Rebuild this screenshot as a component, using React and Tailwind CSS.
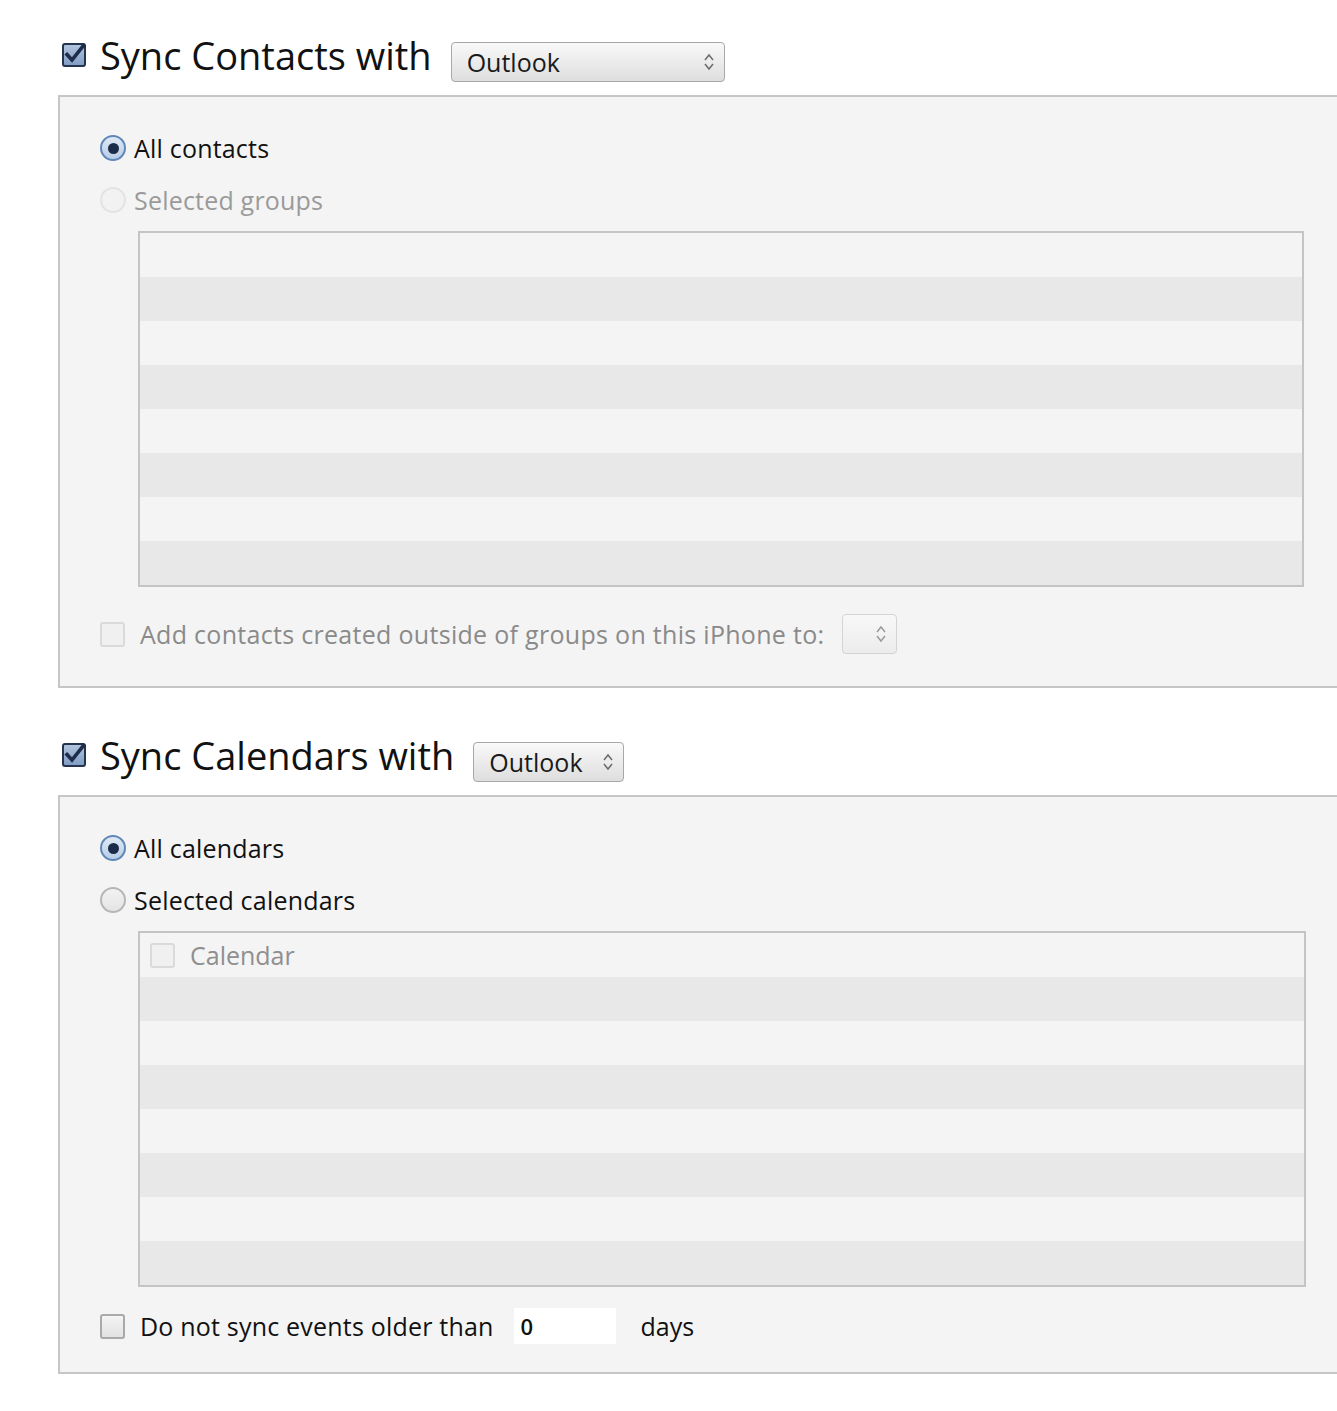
import React from "react";

const font = { fontFamily: '"Open Sans", "Noto Sans", "Liberation Sans", sans-serif' };

function BlueCheck() {
  return (
    <svg width="26" height="26" viewBox="0 0 26 26">
      <defs>
        <linearGradient id="cbg" x1="0" y1="0" x2="0" y2="1">
          <stop offset="0" stopColor="#b4c6de" />
          <stop offset="1" stopColor="#7f9cc4" />
        </linearGradient>
      </defs>
      <rect x="1" y="1" width="22" height="22" rx="2" fill="url(#cbg)" stroke="#24344f" strokeWidth="2" />
      <path d="M5 11.5 L10 17 L21.5 2.5" fill="none" stroke="#1d2d4a" strokeWidth="3.6" strokeLinecap="square" />
    </svg>
  );
}

function Chevrons({ color = "#6b6b6b" }) {
  return (
    <svg width="12" height="22" viewBox="0 0 12 22">
      <path d="M2 9 L6 4 L10 9" fill="none" stroke={color} strokeWidth="1.5" />
      <path d="M2 13 L6 18 L10 13" fill="none" stroke={color} strokeWidth="1.5" />
    </svg>
  );
}

function Dropdown({ label, width, disabled }) {
  return (
    <div
      className={`flex h-[40px] items-center justify-between rounded-[4px] border pl-[15px] pr-[9px] ${
        disabled
          ? "border-[#d4d4d4] bg-gradient-to-b from-[#f8f8f8] to-[#ececec]"
          : "border-[#a8a8a8] bg-gradient-to-b from-[#f9f9f9] to-[#dedede]"
      }`}
      style={{ width }}
    >
      <span className="text-[25px] leading-none text-[#1a1a1a]">{label}</span>
      <Chevrons color={disabled ? "#9a9a9a" : "#6a6a6a"} />
    </div>
  );
}

function Radio({ checked, disabled, label }) {
  return (
    <div className="flex h-[52px] items-center">
      {checked ? (
        <div className="flex h-[26px] w-[26px] items-center justify-center rounded-full border-2 border-[#5f88b8] bg-gradient-to-b from-[#dfe9f5] to-[#b9cde6]">
          <div className="h-[11px] w-[11px] rounded-full bg-[#1c2c48]" />
        </div>
      ) : (
        <div
          className={`h-[26px] w-[26px] rounded-full border-2 ${
            disabled ? "border-[#e3e3e3] bg-[#f2f2f2]" : "border-[#b6b6b6] bg-gradient-to-b from-[#f2f2f2] to-[#e4e4e4]"
          }`}
        />
      )}
      <span
        className={`ml-[8px] text-[25px] leading-none tracking-[0.2px] ${disabled ? "text-[#9a9a9a]" : "text-[#111]"}`}
      >
        {label}
      </span>
    </div>
  );
}

function Box({ disabled }) {
  return (
    <div
      className={`h-[25px] w-[25px] rounded-[3px] border-2 ${
        disabled ? "border-[#dadada] bg-[#f0f0f0]" : "border-[#a9a9a9] bg-gradient-to-b from-[#f4f4f4] to-[#e2e2e2]"
      }`}
    />
  );
}

function ListBox({ width, first }) {
  const rows = [0, 1, 2, 3, 4, 5, 6, 7];
  return (
    <div className="border-2 border-[#c4c4c4]" style={{ width }}>
      {rows.map((r) => (
        <div
          key={r}
          className={`flex h-[44px] items-center ${r % 2 === 0 ? "bg-[#f4f4f4]" : "bg-[#e8e8e8]"}`}
        >
          {r === 0 && first}
        </div>
      ))}
    </div>
  );
}

function Header({ title, ddLabel, ddWidth }) {
  return (
    <div className="flex h-[48px] items-center pl-[4px]">
      <div className="mb-[12px]">
        <BlueCheck />
      </div>
      <span className="mb-[14px] ml-[12px] text-[38px] leading-none text-[#111]">{title}</span>
      <div className="ml-[19px]">
        <Dropdown label={ddLabel} width={ddWidth} />
      </div>
    </div>
  );
}

export default function App() {
  return (
    <div className="min-h-[1411px] w-[1337px] overflow-hidden bg-white pl-[58px] pt-[38px]" style={font}>
      <Header title="Sync Contacts with" ddLabel="Outlook" ddWidth={274} />

      <div className="mt-[9px] border-y-2 border-l-2 border-[#c6c6c6] bg-[#f4f4f4] pb-[30px] pl-[40px] pt-[25px]">
        <Radio checked label="All contacts" />
        <Radio disabled label="Selected groups" />
        <div className="ml-[38px] mt-[5px]">
          <ListBox width={1166} />
        </div>
        <div className="mt-[25px] flex h-[44px] items-center">
          <Box disabled />
          <span className="ml-[15px] text-[25px] leading-none tracking-[0.3px] text-[#8a8a8a]">
            Add contacts created outside of groups on this iPhone to:
          </span>
          <div className="ml-[18px]">
            <Dropdown label="" width={55} disabled />
          </div>
        </div>
      </div>

      <div className="mt-[50px]">
        <Header title="Sync Calendars with" ddLabel="Outlook" ddWidth={151} />
      </div>

      <div className="mt-[9px] border-y-2 border-l-2 border-[#c6c6c6] bg-[#f4f4f4] pb-[24px] pl-[40px] pt-[25px]">
        <Radio checked label="All calendars" />
        <Radio label="Selected calendars" />
        <div className="ml-[38px] mt-[5px]">
          <ListBox
            width={1168}
            first={
              <div className="flex items-center pl-[10px]">
                <Box disabled />
                <span className="ml-[15px] text-[25px] leading-none text-[#8f8f8f]">Calendar</span>
              </div>
            }
          />
        </div>
        <div className="mt-[17px] flex h-[44px] items-center">
          <Box />
          <span className="ml-[15px] text-[25px] leading-none tracking-[0.2px] text-[#111]">
            Do not sync events older than
          </span>
          <div className="ml-[20px] flex h-[36px] w-[102px] items-center bg-white pl-[7px]">
            <span className="text-[22px] font-semibold leading-none text-[#111]">0</span>
          </div>
          <span className="ml-[25px] text-[25px] leading-none text-[#111]">days</span>
        </div>
      </div>
    </div>
  );
}
